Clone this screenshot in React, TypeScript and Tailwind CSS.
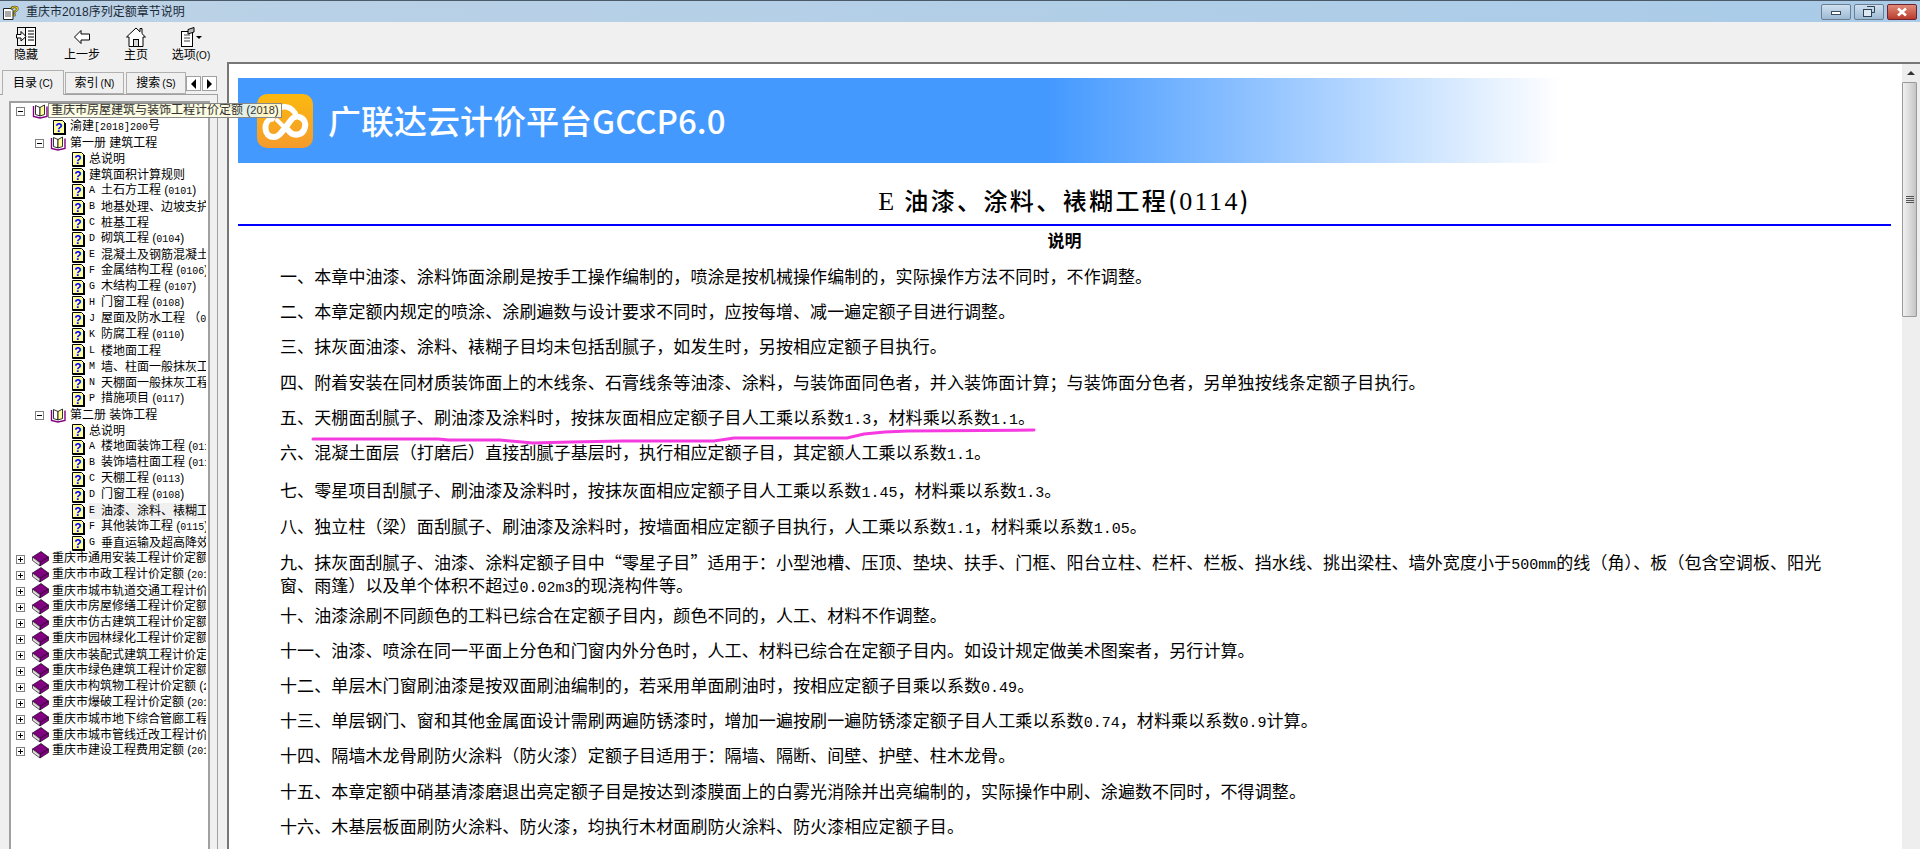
import React from 'react';

const cjk = "font-['Liberation_Sans','Noto_Sans_CJK_SC',sans-serif]";

type Row = { level: 'root' | 'group' | 'doc' | 'leaf' | 'book'; text: string; letter?: string; active?: boolean };

const rows: Row[] = [
  { level: 'root', text: '重庆市房屋建筑与装饰工程计价定额 (2018)' },
  { level: 'doc', text: '渝建[2018]200号' },
  { level: 'group', text: '第一册 建筑工程' },
  { level: 'leaf', text: '总说明' },
  { level: 'leaf', text: '建筑面积计算规则' },
  { level: 'leaf', letter: 'A', text: '土石方工程 (0101)' },
  { level: 'leaf', letter: 'B', text: '地基处理、边坡支护工程' },
  { level: 'leaf', letter: 'C', text: '桩基工程' },
  { level: 'leaf', letter: 'D', text: '砌筑工程 (0104)' },
  { level: 'leaf', letter: 'E', text: '混凝土及钢筋混凝土工程' },
  { level: 'leaf', letter: 'F', text: '金属结构工程 (0106)' },
  { level: 'leaf', letter: 'G', text: '木结构工程 (0107)' },
  { level: 'leaf', letter: 'H', text: '门窗工程 (0108)' },
  { level: 'leaf', letter: 'J', text: '屋面及防水工程 （0109）' },
  { level: 'leaf', letter: 'K', text: '防腐工程 (0110)' },
  { level: 'leaf', letter: 'L', text: '楼地面工程' },
  { level: 'leaf', letter: 'M', text: '墙、柱面一般抹灰工程' },
  { level: 'leaf', letter: 'N', text: '天棚面一般抹灰工程' },
  { level: 'leaf', letter: 'P', text: '措施项目 (0117)' },
  { level: 'group', text: '第二册 装饰工程' },
  { level: 'leaf', text: '总说明' },
  { level: 'leaf', letter: 'A', text: '楼地面装饰工程 (0111)' },
  { level: 'leaf', letter: 'B', text: '装饰墙柱面工程 (0112)' },
  { level: 'leaf', letter: 'C', text: '天棚工程 (0113)' },
  { level: 'leaf', letter: 'D', text: '门窗工程 (0108)' },
  { level: 'leaf', letter: 'E', text: '油漆、涂料、裱糊工程', active: true },
  { level: 'leaf', letter: 'F', text: '其他装饰工程 (0115)' },
  { level: 'leaf', letter: 'G', text: '垂直运输及超高降效' },
  { level: 'book', text: '重庆市通用安装工程计价定额 (2018)' },
  { level: 'book', text: '重庆市市政工程计价定额 (2018)' },
  { level: 'book', text: '重庆市城市轨道交通工程计价定额' },
  { level: 'book', text: '重庆市房屋修缮工程计价定额 (2018)' },
  { level: 'book', text: '重庆市仿古建筑工程计价定额 (2018)' },
  { level: 'book', text: '重庆市园林绿化工程计价定额 (2018)' },
  { level: 'book', text: '重庆市装配式建筑工程计价定额' },
  { level: 'book', text: '重庆市绿色建筑工程计价定额 (2018)' },
  { level: 'book', text: '重庆市构筑物工程计价定额 (2018)' },
  { level: 'book', text: '重庆市爆破工程计价定额 (2018)' },
  { level: 'book', text: '重庆市城市地下综合管廊工程计价定额' },
  { level: 'book', text: '重庆市城市管线迁改工程计价定额' },
  { level: 'book', text: '重庆市建设工程费用定额 (2018)' },
];

const paragraphs = [
  { text: '一、本章中油漆、涂料饰面涂刷是按手工操作编制的，喷涂是按机械操作编制的，实际操作方法不同时，不作调整。' },
  { text: '二、本章定额内规定的喷涂、涂刷遍数与设计要求不同时，应按每增、减一遍定额子目进行调整。' },
  { text: '三、抹灰面油漆、涂料、裱糊子目均未包括刮腻子，如发生时，另按相应定额子目执行。' },
  { text: '四、附着安装在同材质装饰面上的木线条、石膏线条等油漆、涂料，与装饰面同色者，并入装饰面计算；与装饰面分色者，另单独按线条定额子目执行。' },
  { text: '五、天棚面刮腻子、刷油漆及涂料时，按抹灰面相应定额子目人工乘以系数1.3，材料乘以系数1.1。' },
  { text: '六、混凝土面层（打磨后）直接刮腻子基层时，执行相应定额子目，其定额人工乘以系数1.1。' },
  { text: '七、零星项目刮腻子、刷油漆及涂料时，按抹灰面相应定额子目人工乘以系数1.45，材料乘以系数1.3。', gap: 'mt-[3px]' },
  { text: '八、独立柱（梁）面刮腻子、刷油漆及涂料时，按墙面相应定额子目执行，人工乘以系数1.1，材料乘以系数1.05。', gap: 'mt-[1px]' },
  { text: '九、抹灰面刮腻子、油漆、涂料定额子目中“零星子目”适用于：小型池槽、压顶、垫块、扶手、门框、阳台立柱、栏杆、栏板、挡水线、挑出梁柱、墙外宽度小于500mm的线（角）、板（包含空调板、阳光\n窗、雨篷）以及单个体积不超过0.02m3的现浇构件等。' },
  { text: '十、油漆涂刷不同颜色的工料已综合在定额子目内，颜色不同的，人工、材料不作调整。', gap: '-mt-[5px]' },
  { text: '十一、油漆、喷涂在同一平面上分色和门窗内外分色时，人工、材料已综合在定额子目内。如设计规定做美术图案者，另行计算。' },
  { text: '十二、单层木门窗刷油漆是按双面刷油编制的，若采用单面刷油时，按相应定额子目乘以系数0.49。' },
  { text: '十三、单层钢门、窗和其他金属面设计需刷两遍防锈漆时，增加一遍按刷一遍防锈漆定额子目人工乘以系数0.74，材料乘以系数0.9计算。' },
  { text: '十四、隔墙木龙骨刷防火涂料（防火漆）定额子目适用于：隔墙、隔断、间壁、护壁、柱木龙骨。' },
  { text: '十五、本章定额中硝基清漆磨退出亮定额子目是按达到漆膜面上的白雾光消除并出亮编制的，实际操作中刷、涂遍数不同时，不得调整。' },
  { text: '十六、木基层板面刷防火涂料、防火漆，均执行木材面刷防火涂料、防火漆相应定额子目。' },
];

// latin runs are half width, like the bitmap font in the help window
const Latin: React.FC<{ text: string; className: string }> = ({ text, className }) => (
  <>
    {text.split(/([0-9A-Za-z.\[\]]+)/).map((part, i) =>
      i % 2 === 1 ? (
        <span key={i} className={className}>
          {part}
        </span>
      ) : (
        <React.Fragment key={i}>{part}</React.Fragment>
      ),
    )}
  </>
);

const HelpIcon = () => (
  <svg width="13" height="15" viewBox="0 0 13 15" className="shrink-0">
    <path d="M0.5 0.5H9.5L12.5 3.5V14.5H0.5Z" fill="#ffff9c" stroke="#000" />
    <rect x="11" y="3" width="2" height="12" fill="#000" />
    <rect x="1" y="13" width="12" height="2" fill="#000" />
    <text x="6" y="11.5" textAnchor="middle" fontSize="12" fontWeight="700" fill="#0000ff" fontFamily="Liberation Sans">
      ?
    </text>
  </svg>
);

const OpenBook = () => (
  <svg width="16" height="15" viewBox="0 0 16 15" className="shrink-0">
    <path d="M1.5 2V12.5L8 14L15 12.5V2.5" fill="#fff" stroke="#800080" strokeWidth="1.4" />
    <path d="M3.5 1.5L8 3.5V12L3.5 10.5Z" fill="#fff" stroke="#000" strokeWidth="0.8" />
    <path d="M8 3.5L12.5 1V10.5L8 12Z" fill="#ffff9c" stroke="#000" strokeWidth="0.8" />
  </svg>
);

const ClosedBook = () => (
  <svg width="17" height="16" viewBox="0 0 17 16" className="shrink-0">
    <path d="M0.5 6L9 0.5L16.5 6L8 11.5Z" fill="#800080" stroke="#1a001a" strokeWidth="0.7" />
    <path d="M0.5 6V9.5L8 15L8 11.5Z" fill="#e8e8e8" stroke="#1a001a" strokeWidth="0.7" />
    <path d="M8 11.5V15L16.5 9.5V6Z" fill="#800080" stroke="#1a001a" strokeWidth="0.7" />
    <path d="M1.5 7.5L8 12.5" stroke="#999" strokeWidth="0.7" />
  </svg>
);

const Expander = ({ open }: { open: boolean }) => (
  <span className="relative block w-[9px] h-[9px] shrink-0 border border-[#808080] bg-white">
    <span className="absolute left-[1px] top-[3px] w-[5px] h-[1px] bg-black" />
    {!open && <span className="absolute left-[3px] top-[1px] w-[1px] h-[5px] bg-black" />}
  </span>
);

const RowLabel = ({ row }: { row: Row }) => (
  <span
    className={`flex-1 min-w-0 overflow-hidden whitespace-pre flex items-center h-[16px] leading-[16px] text-[12px] text-black ${
      row.active ? 'bg-[#f0f0f0]' : ''
    }`}
  >
    {row.letter && <span className="w-[12px] shrink-0 font-['Liberation_Mono',monospace] text-[10px]">{row.letter}</span>}
    <span>
      <Latin text={row.text} className="font-['Liberation_Mono',monospace] text-[10px]" />
    </span>
  </span>
);

const TreeRow = ({ row }: { row: Row }) => {
  if (row.level === 'root' || row.level === 'book') {
    return (
      <div className="flex items-center h-[16px] pl-[5px]">
        <Expander open={row.level === 'root'} />
        <span className="w-[7px] shrink-0" />
        {row.level === 'root' ? <OpenBook /> : <ClosedBook />}
        <span className={row.level === 'root' ? 'w-[4px] shrink-0' : 'w-[3px] shrink-0'} />
        <RowLabel row={row} />
      </div>
    );
  }
  if (row.level === 'group') {
    return (
      <div className="flex items-center h-[16px] pl-[24px]">
        <Expander open />
        <span className="w-[6px] shrink-0" />
        <OpenBook />
        <span className="w-[4px] shrink-0" />
        <RowLabel row={row} />
      </div>
    );
  }
  return (
    <div className={`flex items-center h-[16px] ${row.level === 'doc' ? 'pl-[42px]' : 'pl-[61px]'}`}>
      <HelpIcon />
      <span className="w-[4px] shrink-0" />
      <RowLabel row={row} />
    </div>
  );
};

const ToolButton = ({ icon, label, className }: { icon: React.ReactNode; label: React.ReactNode; className: string }) => (
  <div className={`flex flex-col items-center ${className}`}>
    <div className="h-[23px] flex items-center justify-center">{icon}</div>
    <div className="text-[12px] leading-[14px] text-black whitespace-nowrap">{label}</div>
  </div>
);

const Logo = () => (
  <svg width="56" height="54" viewBox="0 0 56 54" className="shrink-0">
    <defs>
      <linearGradient id="logoFill" x1="0" y1="0" x2="0" y2="1">
        <stop offset="0" stopColor="#fcb90f" />
        <stop offset="1" stopColor="#f59b2d" />
      </linearGradient>
    </defs>
    <rect width="56" height="54" rx="10" fill="url(#logoFill)" />
    <path
      d="M15 24C6 27 6 43 17 43C22 43 25 38 34 26C39 19 50 24 48 33C46 42 36 43 31 36"
      fill="none"
      stroke="#fff"
      strokeWidth="6"
      strokeLinecap="round"
    />
    <path d="M15 25C16 13 30 8 38 19" fill="none" stroke="#fff" strokeWidth="5.5" strokeLinecap="round" />
    <path d="M20 26L27 33" stroke="#fff" strokeWidth="4" strokeLinecap="round" />
  </svg>
);

export default function App() {
  return (
    <div lang="zh-CN" className={`relative w-[1920px] h-[849px] overflow-hidden flex flex-col bg-[#f0f0f0] ${cjk}`}>
      {/* Title bar */}
      <div className="h-[22px] shrink-0 flex items-center border-t border-[#4a5a68] bg-gradient-to-r from-[#bcd2e6] to-[#a9cbe8]">
        <svg width="18" height="18" viewBox="0 0 18 18" className="ml-[2px] mr-[6px] shrink-0">
          <path d="M1.5 5.5H9L11 7.5V16.5H1.5Z" fill="#fff" stroke="#222" />
          <path d="M3 9H9M3 11H9M3 13H9" stroke="#555" />
          <text x="12.5" y="13" textAnchor="middle" fontSize="15" fontWeight="700" fill="#f5d800" stroke="#222" strokeWidth="0.5" fontFamily="Liberation Sans">
            ?
          </text>
        </svg>
        <span className="text-[12px] text-[#1c2a36]">重庆市2018序列定额章节说明</span>
        <div className="ml-auto flex gap-[3px] pr-[3px]">
          <div className="w-[30px] h-[16px] rounded-[2px] border border-[#6c7f92] bg-gradient-to-b from-[#cfe0ef] to-[#9dbad4] flex items-center justify-center">
            <span className="w-[10px] h-[4px] mt-[2px] bg-white border border-[#3b4d5f]" />
          </div>
          <div className="w-[30px] h-[16px] rounded-[2px] border border-[#6c7f92] bg-gradient-to-b from-[#cfe0ef] to-[#9dbad4] flex items-center justify-center">
            <svg width="12" height="11" viewBox="0 0 12 11">
              <path d="M4 0.5H11.5V6.5H9" fill="none" stroke="#2f4254" />
              <rect x="0.5" y="3.5" width="8" height="7" fill="#dce8f2" stroke="#2f4254" />
            </svg>
          </div>
          <div className="w-[30px] h-[16px] rounded-[2px] border border-[#6d2430] bg-gradient-to-b from-[#e08a78] to-[#b93a2c] flex items-center justify-center">
            <svg width="12" height="10" viewBox="0 0 12 10">
              <path d="M2 1.5L10 8.5M10 1.5L2 8.5" stroke="#fff" strokeWidth="2.6" />
            </svg>
          </div>
        </div>
      </div>

      {/* Toolbar */}
      <div className="h-[40px] shrink-0 flex items-start pt-[3px]">
        <ToolButton
          className="w-[52px]"
          label="隐藏"
          icon={
            <svg width="20" height="19" viewBox="0 0 20 19">
              <rect x="1.5" y="0.5" width="18" height="18" fill="#f0f0f0" stroke="#000" />
              <rect x="9.5" y="0.5" width="10" height="18" fill="#fff" stroke="#000" />
              <path d="M12 4H18M12 7H18M12 10H18M12 13H18" stroke="#000" />
              <path d="M0.5 7.5H5V4.5L10 9.5L5 14V11H0.5Z" fill="#fff" stroke="#000" />
            </svg>
          }
        />
        <ToolButton
          className="w-[60px]"
          label="上一步"
          icon={
            <svg width="16" height="14" viewBox="0 0 16 14">
              <path d="M0.5 7L7 0.5V4H15.5V10H7V13.5Z" fill="#fff" stroke="#000" />
            </svg>
          }
        />
        <ToolButton
          className="w-[48px]"
          label="主页"
          icon={
            <svg width="20" height="20" viewBox="0 0 20 20">
              <path d="M0.5 10L10 1L14 4.8V1.5H16V6.7L19.5 10H17V19.5H3V10Z" fill="#fff" stroke="#000" />
              <rect x="7.5" y="12.5" width="5" height="7" fill="#d8d8d8" stroke="#000" />
            </svg>
          }
        />
        <ToolButton
          className="w-[62px]"
          label={
            <>
              选项<span className="text-[10px]">(O)</span>
            </>
          }
          icon={
            <svg width="22" height="20" viewBox="0 0 22 20">
              <rect x="1.5" y="4.5" width="11" height="15" fill="#fff" stroke="#000" />
              <path d="M4 8H10M4 11H10M4 14H10" stroke="#444" />
              <path d="M8 2.5L14 0.5V5L8 7Z" fill="#bbb" stroke="#000" />
              <path d="M16 9H22L19 12Z" fill="#000" />
            </svg>
          }
        />
      </div>

      <div className="flex-1 min-h-0 flex">
        {/* Left pane */}
        <div className="w-[218px] shrink-0 flex flex-col pt-[7px]">
          <div className="h-[25px] shrink-0 flex items-end relative z-10 pl-[2px] text-[12px] text-black">
            <div className="w-[62px] h-[25px] -mb-[1px] bg-[#f0f0f0] border border-b-0 border-[#b0b0b0] flex items-center justify-center">
              目录<span className="ml-[2px] text-[10px]">(C)</span>
            </div>
            <div className="w-[59px] h-[22px] ml-[1px] border border-[#b0b0b0] bg-[#f0f0f0] flex items-center justify-center">
              索引<span className="ml-[2px] text-[10px]">(N)</span>
            </div>
            <div className="w-[60px] h-[22px] ml-[2px] border border-[#b0b0b0] bg-[#f0f0f0] flex items-center justify-center">
              搜索<span className="ml-[2px] text-[10px]">(S)</span>
            </div>
            <div className="flex gap-[1px] mb-[3px]">
              <div className="w-[15px] h-[15px] border border-[#a0a0a0] bg-white flex items-center justify-center">
                <span className="w-0 h-0 border-y-[5px] border-y-transparent border-r-[5px] border-r-black" />
              </div>
              <div className="w-[15px] h-[15px] border border-[#a0a0a0] bg-white flex items-center justify-center">
                <span className="w-0 h-0 border-y-[5px] border-y-transparent border-l-[5px] border-l-black" />
              </div>
            </div>
          </div>
          <div className="flex-1 min-h-0 border-t border-r border-[#a0a0a0] pl-[9px] pr-[7px] pt-[6px]">
            <div className="h-full bg-white border-2 border-b-0 border-[#a0a0a0] pr-[2px] overflow-hidden">
              {rows.map((row, i) => (
                <TreeRow key={i} row={row} />
              ))}
            </div>
          </div>
        </div>

        {/* Splitter */}
        <div className="w-[9px] shrink-0 bg-[#f0f0f0]" />

        {/* Content */}
        <div className="flex-1 min-w-0 bg-white border-l-2 border-t-2 border-[#777] pl-[9px] pr-[11px] pt-[14px] text-black font-['Noto_Sans_CJK_SC',sans-serif]">
          <div className="h-[85px] flex items-center pl-[19px] gap-[15px] bg-[linear-gradient(90deg,#4499ff_49%,#ffffff_80%)]">
            <Logo />
            <span className="text-[33px] leading-none text-white font-medium">广联达云计价平台GCCP6.0</span>
          </div>
          <div className="h-[63px] flex items-end justify-center pb-[8px] border-b-2 border-[#0000ff]">
            <span className="text-[24px] leading-[32px] tracking-[2.4px] font-medium whitespace-pre">
              <Latin text="E 油漆、涂料、裱糊工程(0114)" className="font-['Liberation_Serif',serif] text-[26px] leading-none" />
            </span>
          </div>
          <div className="h-[32px] text-center text-[17px] font-bold leading-[28px]">说明</div>
          <div className="pl-[42px] pr-[30px] pt-[6px] flex flex-col gap-[12.2px] text-[17px] tracking-[0.1px] leading-[23px]">
            {paragraphs.map((p, i) => (
              <p key={i} className={`whitespace-pre-line ${p.gap ?? ''}`}>
                <Latin text={p.text} className="font-['Liberation_Mono',monospace] text-[15px] leading-none tracking-normal" />
              </p>
            ))}
          </div>
        </div>

        {/* Scrollbar */}
        <div className="w-[18px] shrink-0 flex flex-col bg-[#eeeeee] border-t-2 border-[#777]">
          <div className="h-[18px] shrink-0 flex items-center justify-center">
            <span className="w-0 h-0 border-x-[4px] border-x-transparent border-b-[4px] border-b-[#333]" />
          </div>
          <div className="h-[235px] w-[15px] rounded-[1px] border border-[#9a9a9a] bg-gradient-to-r from-[#f0f0f0] via-[#dcdcdc] to-[#c4c4c4] flex flex-col items-center justify-center gap-[1px]">
            <span className="w-[8px] h-[1px] bg-[#555]" />
            <span className="w-[8px] h-[1px] bg-[#555]" />
            <span className="w-[8px] h-[1px] bg-[#555]" />
            <span className="w-[8px] h-[1px] bg-[#555]" />
          </div>
        </div>
      </div>

      {/* Tree item tooltip */}
      <div className="absolute left-[48px] top-[103px] w-[234px] h-[15px] bg-[#ffffe1]/85 border border-[#888] pl-[2px] text-[12px] leading-[13px] text-[#333] whitespace-pre overflow-hidden">
        <Latin text="重庆市房屋建筑与装饰工程计价定额 (2018)" className="text-[11px]" />
      </div>

      {/* Hand drawn mark under item 5 */}
      <svg width="1920" height="849" viewBox="0 0 1920 849" className="absolute left-0 top-0 pointer-events-none">
        <path
          d="M313 439L438 439L449 440L500 440L533 443L571 442L622 441L714 441L734 438L847 438L864 434L885 432L908 431L1034 430"
          fill="none"
          stroke="#f53be0"
          strokeWidth="3"
          strokeLinejoin="round"
          strokeLinecap="round"
        />
      </svg>
    </div>
  );
}
